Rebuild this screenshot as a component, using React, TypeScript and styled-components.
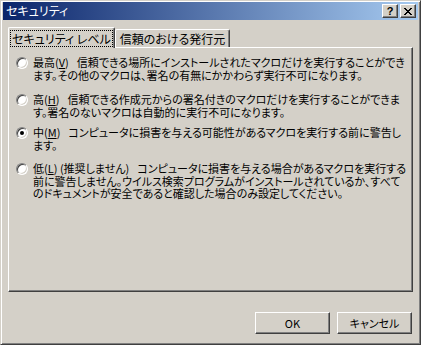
import React from "react";
import styled, { createGlobalStyle } from "styled-components";

const GlobalStyle = createGlobalStyle`
  html, body {
    margin: 0;
    padding: 0;
    background: #d4d0c8;
  }
  * {
    box-sizing: border-box;
  }
`;

const Window = styled.div`
  width: 421px;
  height: 345px;
  background: #d4d0c8;
  border: 1px solid;
  border-color: #d4d0c8 #404040 #404040 #d4d0c8;
  box-shadow: inset 1px 1px #ffffff, inset -1px -1px #808080;
  padding: 2px;
  display: flex;
  flex-direction: column;
  font-family: "Noto Sans CJK JP", "Liberation Sans", sans-serif;
  font-feature-settings: "palt";
  color: #000;
`;

const TitleBar = styled.div`
  height: 18px;
  margin-top: -1px;
  display: flex;
  align-items: center;
  padding: 0 2px 0 3px;
  background: linear-gradient(90deg, #0a246a 0%, #a6caf0 100%);
  color: #fff;
  font-size: 12px;
`;

const TitleText = styled.div`
  flex: 1;
  line-height: 18px;
`;

const TitleButton = styled.div<{ gap?: number }>`
  width: 16px;
  height: 14px;
  margin-left: ${({ gap }) => gap ?? 0}px;
  background: #d4d0c8;
  border: 1px solid;
  border-color: #ffffff #404040 #404040 #ffffff;
  box-shadow: inset -1px -1px #808080;
  display: flex;
  align-items: center;
  justify-content: center;
  color: #000;
  font-family: "Liberation Sans", sans-serif;
  font-weight: 700;
  font-size: 11px;
  line-height: 1;
`;

const Body = styled.div`
  flex: 1;
  display: flex;
  flex-direction: column;
  padding: 7px 5px 0 5px;
`;

const TabRow = styled.div`
  height: 20px;
  display: flex;
  align-items: flex-end;
`;

const Tab = styled.div<{ active?: boolean }>`
  position: relative;
  z-index: ${({ active }) => (active ? 2 : 1)};
  height: ${({ active }) => (active ? 21 : 18)}px;
  margin-bottom: ${({ active }) => (active ? -1 : 0)}px;
  padding: 0 ${({ active }) => (active ? 2 : 4)}px;
  display: flex;
  align-items: center;
  background: #d4d0c8;
  border-top: 1px solid #ffffff;
  border-left: 1px solid #ffffff;
  border-right: 1px solid #404040;
  border-top-left-radius: 2px;
  border-top-right-radius: 2px;
  box-shadow: inset -1px 0 #808080;
  font-size: 12px;
`;

const FocusLabel = styled.span`
  outline: 1px dotted #000;
  padding: 0 1px;
  line-height: 15px;
`;

const Panel = styled.div`
  height: 245px;
  background: #d4d0c8;
  border: 1px solid;
  border-color: #ffffff #404040 #404040 #ffffff;
  box-shadow: inset -1px -1px #808080;
  padding: 8px 6px 0 7px;
  display: flex;
  flex-direction: column;
`;

const Option = styled.div<{ space: number }>`
  display: flex;
  gap: 5px;
  margin-bottom: ${({ space }) => space}px;
`;

const Radio = styled.div<{ checked?: boolean }>`
  flex: none;
  width: 12px;
  height: 12px;
  margin-top: 1px;
  border-radius: 50%;
  border: 1px solid;
  border-color: #808080 #ffffff #ffffff #808080;
  background: #ffffff;
  box-shadow: inset 1px 1px #404040, inset -1px -1px #d4d0c8;
  display: flex;
  align-items: center;
  justify-content: center;
  &::after {
    content: "";
    width: 4px;
    height: 4px;
    border-radius: 50%;
    background: ${({ checked }) => (checked ? "#000" : "transparent")};
  }
`;

const OptionText = styled.div`
  font-size: 11px;
  line-height: 12.5px;
  white-space: nowrap;
`;

const Line = styled.div``;

const Label = styled.span`
  margin-right: 8px;
`;

const Footer = styled.div`
  display: flex;
  justify-content: flex-end;
  gap: 7px;
  padding: 20px 1px 0 0;
`;

const Button = styled.button`
  width: 75px;
  height: 22px;
  background: #d4d0c8;
  border: 1px solid;
  border-color: #ffffff #404040 #404040 #ffffff;
  box-shadow: inset -1px -1px #808080;
  font-family: "Noto Sans CJK JP", "Liberation Sans", sans-serif;
  font-feature-settings: "palt";
  font-size: 11px;
  color: #000;
  padding: 0;
`;

const CloseGlyph = () => (
  <svg width="8" height="7" viewBox="0 0 8 7">
    <path
      d="M0 0h2v1h1v1h2V1h1V0h2v1H7v1H6v1H5v1h1v1h1v1h1v1H6V6H5V5H3v1H2v1H0V6h1V5h1V4h1V3H2V2H1V1H0z"
      fill="#000"
    />
  </svg>
);

const options = [
  {
    label: "最高",
    key: "V",
    checked: false,
    space: 12,
    lines: [
      "信頼できる場所にインストールされたマクロだけを実行することができ",
      "ます。その他のマクロは、署名の有無にかかわらず実行不可になります。",
    ],
  },
  {
    label: "高",
    key: "H",
    checked: false,
    space: 8,
    lines: [
      "信頼できる作成元からの署名付きのマクロだけを実行することができま",
      "す。署名のないマクロは自動的に実行不可になります。",
    ],
  },
  {
    label: "中",
    key: "M",
    checked: true,
    space: 11,
    lines: ["コンピュータに損害を与える可能性があるマクロを実行する前に警告し", "ます。"],
  },
  {
    label: "低",
    key: "L",
    extra: " (推奨しません)",
    checked: false,
    space: 0,
    lines: [
      "コンピュータに損害を与える場合があるマクロを実行する",
      "前に警告しません。ウイルス検索プログラムがインストールされているか、すべて",
      "のドキュメントが安全であると確認した場合のみ設定してください。",
    ],
  },
];

const App = () => {
  return (
    <>
      <GlobalStyle />
      <Window>
        <TitleBar>
          <TitleText>セキュリティ</TitleText>
          <TitleButton>?</TitleButton>
          <TitleButton gap={2}>
            <CloseGlyph />
          </TitleButton>
        </TitleBar>
        <Body>
          <TabRow>
            <Tab active>
              <FocusLabel>セキュリティ レベル</FocusLabel>
            </Tab>
            <Tab>信頼のおける発行元</Tab>
          </TabRow>
          <Panel>
            {options.map((o) => (
              <Option key={o.key} space={o.space}>
                <Radio checked={o.checked} />
                <OptionText>
                  {o.lines.map((line, i) => (
                    <Line key={i}>
                      {i === 0 && (
                        <Label>
                          {o.label}(<u>{o.key}</u>){o.extra}
                        </Label>
                      )}
                      {line}
                    </Line>
                  ))}
                </OptionText>
              </Option>
            ))}
          </Panel>
          <Footer>
            <Button>OK</Button>
            <Button>キャンセル</Button>
          </Footer>
        </Body>
      </Window>
    </>
  );
};

export default App;
